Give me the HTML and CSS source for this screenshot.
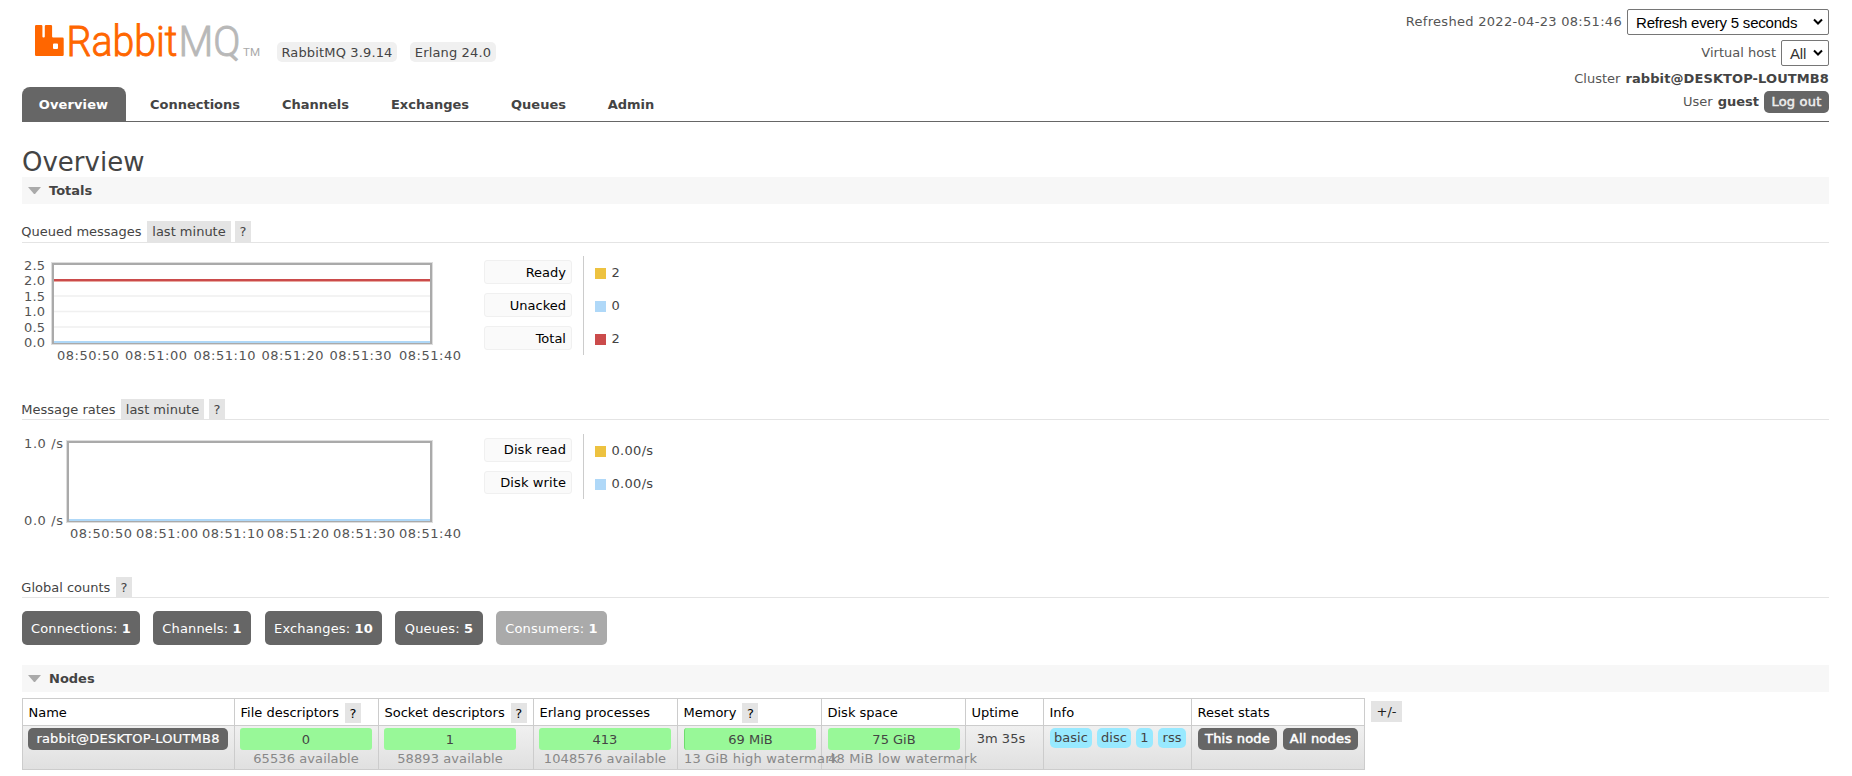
FILE: index.html
```html
<!DOCTYPE html>
<html lang="en">
<head>
<meta charset="utf-8">
<title>RabbitMQ Management</title>
<link rel="stylesheet" href="styles.css">
</head>
<body>
<header class="header">
  <div class="brand">
    <svg class="logo" width="240" height="50" viewBox="22 15 240 50" role="img" aria-label="RabbitMQ">
      <path fill="#f60" d="M36.2 25h5a1.2 1.2 0 0 1 1.2 1.2V36.500a1 1 0 0 0 1 1h.4a1 1 0 0 0 1-1V26.200a1.200 1.200 0 0 1 1.200-1.200h4.900a1.200 1.200 0 0 1 1.200 1.200V36.500a1 1 0 0 0 1 1H62.500a1.200 1.200 0 0 1 1.200 1.200V54.800a1.200 1.200 0 0 1-1.200 1.200H36.200a1.200 1.200 0 0 1-1.200-1.200V26.200a1.200 1.200 0 0 1 1.200-1.200zM54 43.500a1 1 0 0 0-1 1v3.500a1 1 0 0 0 1 1h3a1 1 0 0 0 1-1v-3.500a1 1 0 0 0-1-1z"/>
      <text class="logo-word logo-orange" x="66.500" y="55.500" textLength="111" lengthAdjust="spacingAndGlyphs">Rabbit</text>
      <text class="logo-word logo-gray" x="178.500" y="55.500" textLength="62" lengthAdjust="spacingAndGlyphs">MQ</text>
      <text class="logo-tm" x="243" y="56" textLength="17" lengthAdjust="spacingAndGlyphs">TM</text>
    </svg>
    <span class="version v1">RabbitMQ 3.9.14</span>
    <span class="version v2">Erlang 24.0</span>
  </div>
  <div class="status">
    <div class="status-row r1"><span class="t-refreshed">Refreshed 2022-04-23 08:51:46</span><span class="select s1">Refresh every 5 seconds<svg width="10" height="8" viewBox="0 0 10 8"><path d="M1 1.500l4 4 4-4"/></svg></span></div>
    <div class="status-row r2"><span>Virtual host</span><span class="select s2">All<svg width="10" height="8" viewBox="0 0 10 8"><path d="M1 1.500l4 4 4-4"/></svg></span></div>
    <div class="status-row r3"><span>Cluster</span><b class="t-cluster">rabbit@DESKTOP-LOUTMB8</b></div>
    <div class="status-row r4"><span>User</span><b>guest</b><span class="button logout">Log out</span></div>
  </div>
</header>
<nav class="tabs">
  <a class="tab active">Overview</a><a class="tab w-con">Connections</a><a class="tab w-cha">Channels</a><a class="tab w-exc">Exchanges</a><a class="tab w-que">Queues</a><a class="tab w-adm">Admin</a>
</nav>
<main>
  <h1>Overview</h1>
  <h2><i class="arrow"></i>Totals</h2>

  <h3 class="h-queued"><span class="t-queued">Queued messages</span><span class="tag w84">last minute</span><span class="tag help">?</span></h3>
  <div class="chart-row">
    <svg class="chart" width="462" height="120" viewBox="22 250 462 120">
      <g class="axis">
        <text x="24" y="270" textLength="21">2.5</text><text x="24" y="285" textLength="21">2.0</text><text x="24" y="301" textLength="21">1.5</text><text x="24" y="316" textLength="21">1.0</text><text x="24" y="332" textLength="21">0.5</text><text x="24" y="347" textLength="21">0.0</text>
        <text x="57" y="360" textLength="62">08:50:50</text><text x="125" y="360" textLength="62">08:51:00</text><text x="193.500" y="360" textLength="62">08:51:10</text><text x="261.500" y="360" textLength="62">08:51:20</text><text x="329.500" y="360" textLength="62">08:51:30</text><text x="399" y="360" textLength="62">08:51:40</text>
      </g>
      <path class="grid" d="M54 296h376M54 311.500h376M54 327h376"/>
      <rect class="frame-soft" x="51.500" y="262.500" width="381" height="82"/>
      <rect class="frame" x="53" y="264" width="378" height="79"/>
      <path d="M54 280h376" stroke="#cb4b4b" stroke-width="2"/><path d="M54 281.500h376" stroke="#e9a9a0"/>
      <path d="M54 342h376" stroke="#afd8f8" stroke-width="2"/>
    </svg>
    <div class="legend">
      <div class="keys"><span>Ready</span><span>Unacked</span><span>Total</span></div>
      <div class="values"><span><i class="sw yellow"></i>2</span><span><i class="sw blue"></i>0</span><span><i class="sw red"></i>2</span></div>
    </div>
  </div>

  <h3 class="h-rates"><span class="t-rates">Message rates</span><span class="tag w83">last minute</span><span class="tag help">?</span></h3>
  <div class="chart-row second">
    <svg class="chart" width="462" height="120" viewBox="22 428 462 120">
      <g class="axis">
        <text x="24" y="448" textLength="39">1.0 /s</text><text x="24" y="525" textLength="39">0.0 /s</text>
        <text x="70" y="538" textLength="62">08:50:50</text><text x="136" y="538" textLength="62">08:51:00</text><text x="202" y="538" textLength="62">08:51:10</text><text x="267" y="538" textLength="62">08:51:20</text><text x="333" y="538" textLength="62">08:51:30</text><text x="399" y="538" textLength="62">08:51:40</text>
      </g>
      <rect class="frame-soft" x="66.500" y="440.500" width="366" height="82"/>
      <rect class="frame" x="68" y="442" width="363" height="79"/>
      <path d="M69 520h361" stroke="#afd8f8" stroke-width="2"/>
    </svg>
    <div class="legend">
      <div class="keys"><span>Disk read</span><span>Disk write</span></div>
      <div class="values"><span><i class="sw yellow"></i>0.00/s</span><span><i class="sw blue"></i>0.00/s</span></div>
    </div>
  </div>

  <h3 class="h-global"><span class="t-global">Global counts</span><span class="tag help">?</span></h3>
  <div class="counts">
    <span class="count c1">Connections: <b>1</b></span><span class="count c2">Channels: <b>1</b></span><span class="count c3">Exchanges: <b>10</b></span><span class="count c4">Queues: <b>5</b></span><span class="count c5 off">Consumers: <b>1</b></span>
  </div>

  <h2 class="nodes-h"><i class="arrow"></i>Nodes</h2>
  <div class="nodes">
    <div class="table">
      <div class="th">Name</div><div class="th">File descriptors<span class="tag help">?</span></div><div class="th">Socket descriptors<span class="tag help">?</span></div><div class="th">Erlang processes</div><div class="th">Memory<span class="tag help">?</span></div><div class="th">Disk space</div><div class="th">Uptime</div><div class="th">Info</div><div class="th">Reset stats</div>
      <div class="td"><span class="button node">rabbit@DESKTOP-LOUTMB8</span></div>
      <div class="td"><div class="bar">0</div><div class="sub">65536 available</div></div>
      <div class="td"><div class="bar">1</div><div class="sub">58893 available</div></div>
      <div class="td"><div class="bar">413</div><div class="sub">1048576 available</div></div>
      <div class="td wide"><div class="bar used">69 MiB</div><div class="sub left">13 GiB high watermark</div></div>
      <div class="td wide"><div class="bar">75 GiB</div><div class="sub left">48 MiB low watermark</div></div>
      <div class="td uptime">3m 35s</div>
      <div class="td info"><span class="pill p1">basic</span><span class="pill p2">disc</span><span class="pill p3">1</span><span class="pill p4">rss</span></div>
      <div class="td info"><span class="button b1">This node</span><span class="button b2">All nodes</span></div>
    </div>
    <span class="tag plus">+/-</span>
  </div>
</main>
</body>
</html>
```
FILE: styles.css
```css
* { box-sizing: border-box; }
html, body { margin: 0; padding: 0; }
body {
  width: 1852px; height: 776px; overflow: hidden; padding: 0 23px 0 22px;
  background: #fff; color: #444; font: 13px/20px Verdana, "DejaVu Sans", sans-serif;
  white-space: nowrap;
}
.header { display: flex; justify-content: space-between; height: 87px; }
.brand { display: flex; align-items: flex-start; padding-top: 15px; }
.logo { flex: none; margin-right: 15px; }
.logo-word { font: 300 42.500px Roboto, sans-serif; stroke-width: .9; }
.logo-orange { fill: #f60; stroke: #f60; }
.logo-gray { fill: #b8b8b8; stroke: #b8b8b8; }
.logo-tm { font: 400 11px Roboto, sans-serif; fill: #aaa; }
.version { height: 20px; margin-top: 27px; border-radius: 5px; background: #f0f0f0; text-align: center; line-height: 21px; letter-spacing: .15px; }
.v1 { width: 120px; margin-right: 13px; }
.v2 { width: 86px; }

.status { display: flex; flex-direction: column; align-items: flex-end; padding-top: 9px; }
.status-row { display: flex; align-items: center; gap: 5px; color: #555; }
.status-row b { color: #444; }
.t-refreshed { letter-spacing: .3px; }
.t-cluster { letter-spacing: .1px; }
.r1 { height: 26px; margin-bottom: 5px; }
.r2 { height: 26px; margin-bottom: 3px; }
.r3 { height: 21px; margin-bottom: 1px; }
.r4 { height: 22px; }
.r4 > * { position: relative; top: 1px; }
.select {
  display: flex; align-items: center; justify-content: space-between; height: 26px; padding: 0 5px 0 8px;
  border: 1px solid #767676; border-radius: 2px; background: #fff; color: #000; font: 15px "Liberation Sans", Arial, sans-serif; letter-spacing: -.2px;
}
.select path { fill: none; stroke: #000; stroke-width: 2; }
.s1 { width: 202px; }
.s2 { width: 48px; color: #333; }
.button { display: inline-block; height: 22px; border-radius: 5px; background: #666; color: #fff; line-height: 22px; text-align: center; -webkit-text-stroke: .5px currentColor; letter-spacing: .2px; }
.logout { width: 65px; color: #eee; }

.tabs { display: flex; height: 35px; border-bottom: 1px solid #666; }
.tab { height: 34px; width: 132px; text-align: center; font-weight: bold; line-height: 35px; }
.tab.active { width: 104px; padding-right: 1px; border-radius: 8px 8px 0 0; background: #666; color: #fff; letter-spacing: .1px; }
.w-con { width: 138px; }
.w-cha { width: 103px; }
.w-exc { width: 126px; }
.w-que { width: 91px; }
.w-adm { width: 94px; }

h1 { height: 55px; margin: 0; padding-top: 24px; font-size: 26px; font-weight: normal; line-height: 32px; }
h2 { display: flex; align-items: center; height: 27px; margin: 0; padding-left: 6px; background: #f7f7f7; font-size: 13px; }
.arrow { width: 13px; margin-right: 8px; border: solid transparent; border-width: 7px 6.500px 0; border-top-color: #aaa; }
h3 { display: flex; align-items: flex-start; height: 21px; margin: 0; border-bottom: 1px solid #e4e4e4; font-size: 13px; font-weight: normal; line-height: 21px; }
.h-queued { height: 22px; margin-top: 17px; }
.tag { height: 20px; background: #e4e4e4; text-align: center; line-height: 21px; }
.h-queued .tag { height: 21px; }
.help { width: 16px; }
h3 > span:first-child { text-indent: -.7px; }
.t-queued { width: 125px; }
.t-rates { width: 99px; }
.t-global { width: 94px; }
.w84 { width: 84px; margin-right: 4px; }
.w83 { width: 83px; margin-right: 5px; }

.chart-row { display: flex; height: 156px; padding-top: 7px; }
.chart-row.second { height: 157px; padding-top: 8px; }
.chart { flex: none; }
.axis { fill: #545454; }
.grid { fill: none; stroke: #f0f0f0; stroke-width: 1.500; }
.frame-soft { fill: none; stroke: #ddd; }
.frame { fill: none; stroke: #aaa; stroke-width: 2; }
.legend { display: flex; align-self: flex-start; margin-top: 6px; }
.keys { display: flex; flex-direction: column; gap: 9px; width: 100px; padding: 4px 11px 5px 0; border-right: 1px solid #ccc; }
.keys span { height: 24px; padding-right: 5px; border: 1px solid #f0f0f0; border-radius: 3px; background: #fafafa; color: #000; line-height: 23px; text-align: right; }
.second .keys { height: 65px; }
.second .keys span { line-height: 21px; letter-spacing: .1px; }
.values { display: flex; flex-direction: column; gap: 9px; padding: 5px 0 0 11px; }
.values span { display: flex; align-items: center; height: 24px; }
.second .values span { letter-spacing: .3px; }
.sw { width: 11px; height: 11px; margin-right: 5.500px; }
.yellow { background: #edc240; }
.blue { background: #afd8f8; }
.red { background: #cb4b4b; }

.counts { display: flex; height: 67px; padding-top: 13px; }
.count { height: 34px; margin-right: 13px; border-radius: 5px; background: #666; color: #fff; line-height: 35px; text-align: center; letter-spacing: .15px; }
.c1 { width: 118px; }
.c2 { width: 98px; margin-right: 14px; }
.c3 { width: 117px; }
.c4 { width: 88px; }
.c5 { width: 111px; }
.off { background: #aaa; }

.nodes { display: flex; align-items: flex-start; padding-top: 6px; }
.table {
  display: grid; grid-template-columns: 212px 144px 155px 144px 144px 144px 78px 148px 173px; grid-template-rows: 27px 44px;
  border: solid #ccc; border-width: 1px 0 0 1px;
}
.th { display: flex; align-items: center; padding: 1px 0 0 5.500px; border: solid #ccc; border-width: 0 1px 1px 0; color: #000; }
.th .tag { margin-left: 6px; }
.td { padding: 2px 0 0 5px; border: solid #ccc; border-width: 0 1px 1px 0; background: linear-gradient(#f0f0f0, #e0e0e0); }
.td.wide { padding-left: 6px; }
.node { width: 200px; -webkit-text-stroke-width: .2px; }
.bar { width: 132px; height: 22px; border-radius: 3px; background: #98f898; line-height: 23px; text-align: center; }
.used { border-left: 1px solid #6fdc6f; }
.sub { position: relative; width: 132px; height: 18px; color: #888; line-height: 18px; text-align: center; letter-spacing: .1px; }
.left { text-align: left; letter-spacing: .2px; }
.td.uptime { padding: 3px 7px 0 0; text-align: center; }
.td.info { padding-left: 6px; display: flex; align-items: flex-start; }
.pill { height: 20px; margin-right: 5px; border-radius: 5px; background: #98e9ff; line-height: 20px; text-align: center; }
.p1 { width: 42px; }
.p2 { width: 34px; }
.p3 { width: 17px; }
.p4 { width: 28px; }
.b1 { width: 79px; margin-right: 6px; }
.b2 { width: 75px; }
.plus { width: 31px; height: 21px; margin: 3px 0 0 6px; color: #222; }
```
